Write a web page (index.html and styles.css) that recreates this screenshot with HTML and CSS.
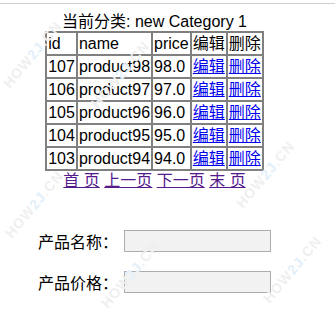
FILE: index.html
```html
<!DOCTYPE html>
<html lang="zh">
<head>
<meta charset="utf-8">
<title>产品列表</title>
<link rel="stylesheet" href="styles.css">
</head>
<body>
<div class="topbar"></div>
<div class="page">
  <div class="cat">当前分类: new Category 1</div>
  <table class="grid">
    <tr><td>id</td><td>name</td><td>price</td><td>编辑</td><td>删除</td></tr>
    <tr><td>107</td><td>product98</td><td>98.0</td><td><a href="#">编辑</a></td><td><a href="#">删除</a></td></tr>
    <tr><td>106</td><td>product97</td><td>97.0</td><td><a href="#">编辑</a></td><td><a href="#">删除</a></td></tr>
    <tr><td>105</td><td>product96</td><td>96.0</td><td><a href="#">编辑</a></td><td><a href="#">删除</a></td></tr>
    <tr><td>104</td><td>product95</td><td>95.0</td><td><a href="#">编辑</a></td><td><a href="#">删除</a></td></tr>
    <tr><td>103</td><td>product94</td><td>94.0</td><td><a href="#">编辑</a></td><td><a href="#">删除</a></td></tr>
  </table>
  <div class="pager"><a href="#">首 页</a> <a href="#">上一页</a> <a href="#">下一页</a> <a href="#">末 页</a></div>
  <form class="form">
    <div class="row"><label class="lbl">产品名称：</label><input class="field" type="text"></div>
    <div class="row"><label class="lbl">产品价格：</label><input class="field" type="text"></div>
  </form>
</div>
<div class="wm wm1">HOW<b>2J</b>.CN</div>
<div class="wm wm2">HOW<b>2J</b>.CN</div>
<div class="wm wm3">HOW<b>2J</b>.CN</div>
<div class="wm wm4">HOW<b>2J</b>.CN</div>
<div class="wm wm5">HOW<b>2J</b>.CN</div>
<div class="wm wm6">HOW<b>2J</b>.CN</div>
</body>
</html>
```
FILE: styles.css
```css
html, body {
  margin: 0;
  padding: 0;
  background: #fff;
}
body {
  position: relative;
  overflow: hidden;
  height: 323px;
  font-family: "Liberation Sans", "Noto Sans CJK SC", sans-serif;
  font-size: 16px;
  color: #000;
}
.topbar {
  margin-top: 3px;
  border-top: 1px solid #cfcfcf;
}
.page {
  width: 293px;
  margin-left: 8px;
}
.cat {
  margin-top: 9px;
  text-align: center;
  line-height: 18px;
}
.grid {
  margin: 0 auto;
  border: 1px solid #808080;
  border-spacing: 0;
}
.grid td {
  border: 1px solid #808080;
  padding: 1px;
  line-height: 19px;
  white-space: nowrap;
}
.grid a {
  color: #0000ee;
}
.pager {
  text-align: center;
  line-height: 20px;
}
.pager a {
  color: #551a8b;
}
.form {
  margin: 39px 0 0;
  padding-left: 30px;
}
.row {
  display: flex;
  align-items: center;
  margin-bottom: 19px;
}
.lbl {
  width: 86px;
  font-family: "Noto Sans CJK SC", sans-serif;
  font-size: 16px;
  line-height: 22px;
}
.field {
  box-sizing: border-box;
  width: 147px;
  height: 22px;
  margin: 0;
  border: 1px solid #a9adb2;
  background: #f2f2f2;
}
.wm {
  position: absolute;
  font-family: "Liberation Sans", sans-serif;
  font-weight: bold;
  font-size: 14px;
  letter-spacing: 1px;
  color: #efefef;
  transform: rotate(-50deg);
  transform-origin: left bottom;
  pointer-events: none;
  white-space: nowrap;
}
.wm b {
  color: #e3f0fa;
}
.wm1 { left: 12px; top: 75px; }
.wm2 { left: 100px; top: 95px; }
.wm3 { left: 245px; top: 195px; }
.wm4 { left: 14px; top: 225px; }
.wm5 { left: 110px; top: 295px; }
.wm6 { left: 272px; top: 290px; }
```
